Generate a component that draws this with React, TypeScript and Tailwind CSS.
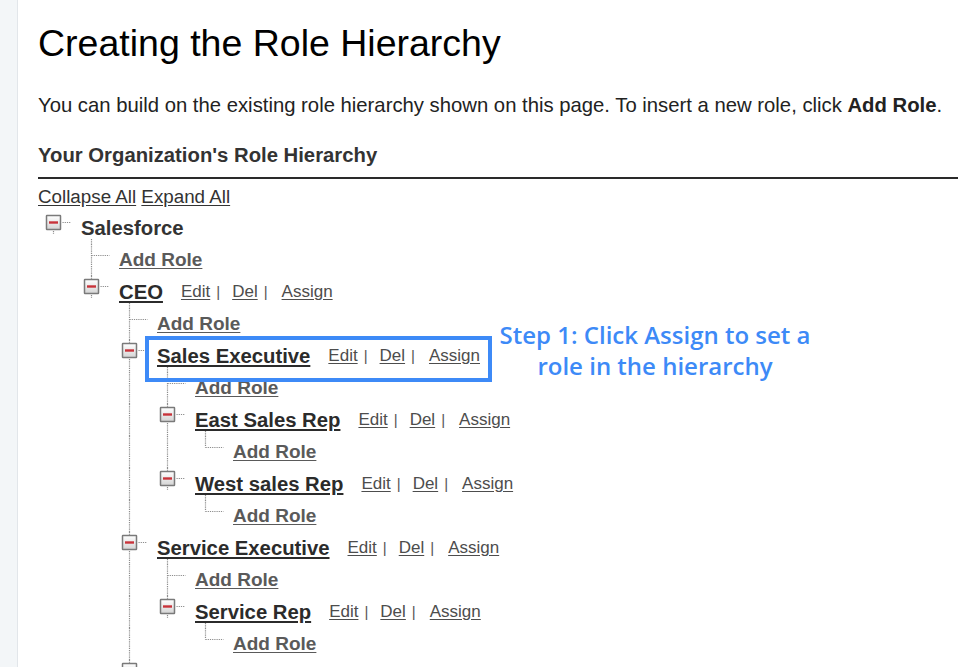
import React from "react";

type Row = {
  label: string;
  level: number;
  kind: "root" | "node" | "leaf";
  cont?: boolean;
  kids?: boolean;
  guides?: number[];
  actions?: boolean;
};

const rows: Row[] = [
  { label: "Salesforce", level: 0, kind: "root", kids: true },
  { label: "Add Role", level: 1, kind: "leaf", cont: true },
  { label: "CEO", level: 1, kind: "node", cont: false, kids: true, actions: true },
  { label: "Add Role", level: 2, kind: "leaf", cont: true },
  { label: "Sales Executive", level: 2, kind: "node", cont: true, kids: true, actions: true },
  { label: "Add Role", level: 3, kind: "leaf", cont: true, guides: [2] },
  { label: "East Sales Rep", level: 3, kind: "node", cont: true, kids: true, guides: [2], actions: true },
  { label: "Add Role", level: 4, kind: "leaf", cont: false, guides: [2, 3] },
  { label: "West sales Rep", level: 3, kind: "node", cont: false, kids: true, guides: [2], actions: true },
  { label: "Add Role", level: 4, kind: "leaf", cont: false, guides: [2] },
  { label: "Service Executive", level: 2, kind: "node", cont: true, kids: true, actions: true },
  { label: "Add Role", level: 3, kind: "leaf", cont: true, guides: [2] },
  { label: "Service Rep", level: 3, kind: "node", cont: false, kids: true, guides: [2], actions: true },
  { label: "Add Role", level: 4, kind: "leaf", cont: false, guides: [2] },
  { label: "", level: 2, kind: "node", cont: true, kids: true },
];

const padClass = ["pl-[47px]", "pl-[85px]", "pl-[123px]", "pl-[161px]", "pl-[199px]"];

const cxOf = (l: number) => 19 + 38 * l + 0.5;
const DOT = "#8c8c8c";

function VLine({ x, y1, y2 }: { x: number; y1: number; y2: number }) {
  return <line x1={x} x2={x} y1={y1} y2={y2} stroke={DOT} strokeWidth={1.2} strokeDasharray="1.2 1" />;
}
function HLine({ y, x1, x2 }: { y: number; x1: number; x2: number }) {
  return <line x1={x1} x2={x2} y1={y} y2={y} stroke={DOT} strokeWidth={1.2} strokeDasharray="1.2 1" />;
}

function Connectors({ row, idx }: { row: Row; idx: number }) {
  const cx = cxOf(row.level);
  const gid = `g${idx}`;
  return (
    <svg className="absolute left-0 top-0 pointer-events-none" width={280} height={32} viewBox="0 0 280 32">
      <defs>
        <linearGradient id={gid} x1="0" y1="0" x2="0" y2="1">
          <stop offset="0" stopColor="#ffffff" />
          <stop offset="1" stopColor="#d4d4d4" />
        </linearGradient>
      </defs>
      {(row.guides || []).map((g) => (
        <VLine key={g} x={cxOf(g)} y1={0} y2={32} />
      ))}
      {row.kind === "leaf" ? (
        <>
          <VLine x={cx} y1={0} y2={row.cont ? 32 : 11.5} />
          <HLine y={11.5} x1={cx} x2={cx + 18} />
        </>
      ) : (
        <>
          {row.kind === "node" && <VLine x={cx} y1={0} y2={3} />}
          {row.cont && <VLine x={cx} y1={19} y2={32} />}
          {!row.cont && <VLine x={cx} y1={19} y2={22} />}
          <rect x={cx - 7} y={3.5} width={14} height={14} fill={`url(#${gid})`} stroke="#7a7a7a" strokeWidth={1.5} rx={0.5} />
          <line x1={cx - 4.5} x2={cx + 4.5} y1={10.5} y2={10.5} stroke="#c8333a" strokeWidth={2.4} />
          <HLine y={10.5} x1={cx + 9} x2={cx + 17} />
          {row.kids && <VLine x={cxOf(row.level + 1)} y1={27} y2={32} />}
        </>
      )}
    </svg>
  );
}

function Actions() {
  return (
    <span className="ml-[18px] flex items-center text-[17px] text-[#4d4d4d]">
      <span className="underline underline-offset-2">Edit</span>
      <span className="ml-[6px] text-[15px] text-[#555]">|</span>
      <span className="ml-[12px] underline underline-offset-2">Del</span>
      <span className="ml-[6px] text-[15px] text-[#555]">|</span>
      <span className="ml-[14px] underline underline-offset-2">Assign</span>
    </span>
  );
}

function TreeRow({ row, idx }: { row: Row; idx: number }) {
  let label: React.ReactNode = null;
  if (row.kind === "root") {
    label = <span className="text-[20.3px] font-bold text-[#333]">{row.label}</span>;
  } else if (row.kind === "leaf") {
    label = <span className="text-[19px] font-bold text-[#5a5a5a] underline underline-offset-2">{row.label}</span>;
  } else if (row.label) {
    label = <span className="text-[20.3px] font-bold text-[#2b2b2b] underline underline-offset-2">{row.label}</span>;
  }
  return (
    <div className={`relative flex h-[32px] items-center whitespace-nowrap ${padClass[row.level]}`}>
      <Connectors row={row} idx={idx} />
      {label}
      {row.actions && <Actions />}
    </div>
  );
}

export default function App() {
  return (
    <div className="relative flex h-[667px] w-[958px] overflow-hidden bg-white" style={{ fontFamily: '"Liberation Sans", Arial, Helvetica, sans-serif' }}>
      <div className="w-[18px] shrink-0 border-r border-[#e2e6ea] bg-[#f3f6f8]" />
      <div className="flex-1 pl-[20px] pt-[25px]">
        <h1 className="text-[37.5px] leading-[37px] text-black">Creating the Role Hierarchy</h1>
        <p className="mt-[31px] whitespace-nowrap text-[20.3px] leading-[24px] text-[#222]">
          You can build on the existing role hierarchy shown on this page. To insert a new role, click <b>Add Role</b>.
        </p>
        <h2 className="mt-[26px] text-[20.3px] font-bold leading-[24px] text-[#333]">Your Organization's Role Hierarchy</h2>
        <div className="mt-[10px] h-[2px] bg-[#2a2a2a]" />
        <div className="mt-[7px] text-[18.8px] leading-[22px] text-[#333]">
          <span className="underline underline-offset-2">Collapse All</span>{" "}
          <span className="underline underline-offset-2">Expand All</span>
        </div>
        <div className="ml-[-4px] mt-[4px]">
          {rows.map((r, i) => (
            <TreeRow key={i} row={r} idx={i} />
          ))}
        </div>
      </div>

      <div className="pointer-events-none absolute left-[145px] top-[336px] h-[46px] w-[347px] border-[4px] border-[#3d8af7]" />
      <div
        className="absolute left-[485px] top-[319px] w-[340px] text-center text-[24px] font-semibold leading-[31px] text-[#3d8af7]"
        style={{ fontFamily: '"Open Sans", "Noto Sans", sans-serif' }}
      >
        Step 1: Click Assign to set a<br />role in the hierarchy
      </div>
    </div>
  );
}
